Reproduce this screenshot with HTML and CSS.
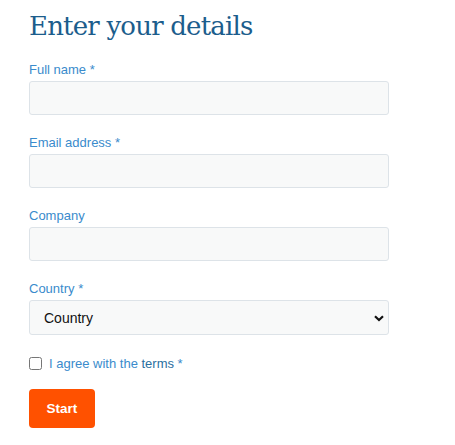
FILE: index.html
```html
<!DOCTYPE html>
<html lang="en">
<head>
  <meta charset="UTF-8">
  <title>Enter your details</title>
  <meta name="viewport" content="width=device-width, initial-scale=1">
  <link rel="stylesheet" href="styles.css">
</head>
<body>

  <form class="details-form">
    <h1 class="form-title">Enter your details</h1>

    <div class="field">
      <label for="fullName">Full name *</label>
      <input type="text" id="fullName">
    </div>

    <div class="field">
      <label for="email">Email address *</label>
      <input type="email" id="email">
    </div>

    <div class="field">
      <label for="company">Company</label>
      <input type="text" id="company">
    </div>

    <div class="field">
      <label for="country">Country *</label>
      <div class="select-wrap">
        <select id="country">
          <option>Country</option>
        </select>
        <svg class="chevron" width="10" height="7" viewBox="0 0 10 7">
          <path d="M1 1.2 L5 5 L9 1.2" fill="none" stroke="#111" stroke-width="2.2"/>
        </svg>
      </div>
    </div>

    <div class="agree">
      <input type="checkbox" id="terms">
      <label for="terms">I agree with the <span class="terms-link">terms</span> *</label>
    </div>

    <button type="button" class="start-btn">Start</button>
  </form>

</body>
</html>
```

FILE: styles.css
```css
* { margin: 0; padding: 0; box-sizing: border-box; }
body {
  background: #fff;
  font-family: 'Liberation Sans', Arial, sans-serif;
  padding: 11px 29px 0;
}
.details-form { width: 360px; display: flex; flex-direction: column; }
.form-title {
  font-family: 'DejaVu Serif', Georgia, serif;
  font-weight: normal;
  font-size: 26px;
  line-height: 30px;
  color: #1c5d8c;
  margin-bottom: 21px;
  letter-spacing: -0.8px;
}
.field { display: flex; flex-direction: column; margin-bottom: 20px; }
.field label {
  font-size: 13px;
  line-height: 15px;
  color: #3a8bcc;
  margin-bottom: 4px;
}
.field input, .field select {
  display: block;
  height: 34px;
  width: 100%;
  border: 1px solid #dde3e8;
  border-radius: 3px;
  background: #f8f9f9;
  font-family: inherit;
  font-size: 14px;
  outline: none;
}
.select-wrap { position: relative; }
.field select {
  -webkit-appearance: none;
  appearance: none;
  height: 35px;
  padding: 0 14px;
  color: #111;
}
.chevron {
  position: absolute;
  right: 5px;
  top: 15px;
  pointer-events: none;
}
.agree {
  display: flex;
  align-items: center;
  gap: 7px;
  margin-top: 1px;
  margin-bottom: 18px;
  height: 15px;
}
.agree input { width: 13px; height: 13px; margin: 0; }
.agree label { font-size: 13px; color: #3a8bcc; }
.terms-link { color: #2a6f9f; }
.start-btn {
  align-self: flex-start;
  width: 66px;
  height: 39px;
  border: none;
  border-radius: 4px;
  background: #ff5100;
  color: #fff;
  font-family: inherit;
  font-weight: bold;
  font-size: 13.5px;
  cursor: pointer;
}
```
